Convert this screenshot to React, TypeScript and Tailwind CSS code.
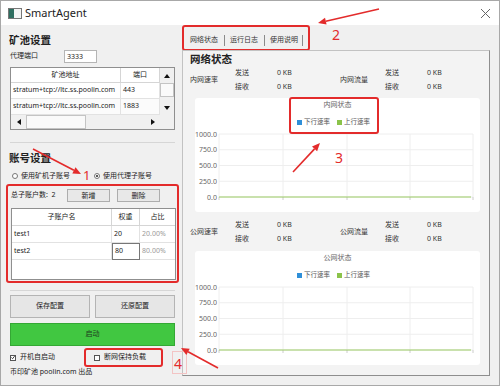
import React from 'react';

const RED = '#e32b2b';

function Tri({ dir }: { dir: 'up' | 'down' | 'left' | 'right' }) {
  const pts = { up: '0,5 3,1 6,5', down: '0,1 3,5 6,1', left: '5,0 1,3 5,6', right: '1,0 5,3 1,6' }[dir];
  return (
    <svg width="6" height="6" viewBox="0 0 6 6">
      <polygon points={pts} fill="#111" />
    </svg>
  );
}

function Arrow({ x1, y1, x2, y2 }: { x1: number; y1: number; x2: number; y2: number }) {
  const a = Math.atan2(y2 - y1, x2 - x1);
  const len = 8;
  const w = 3.5;
  const bx = x2 - Math.cos(a) * len;
  const by = y2 - Math.sin(a) * len;
  const p1 = `${bx + Math.sin(a) * w},${by - Math.cos(a) * w}`;
  const p2 = `${bx - Math.sin(a) * w},${by + Math.cos(a) * w}`;
  return (
    <g>
      <line x1={x1} y1={y1} x2={bx} y2={by} stroke={RED} strokeWidth="1.6" />
      <polygon points={`${x2},${y2} ${p1} ${p2}`} fill={RED} />
    </g>
  );
}

function Chart({ title, boxed }: { title: string; boxed?: boolean }) {
  const ys = [6, 21.75, 37.5, 53.25, 69];
  const labels = ['1000.0', '750.0', '500.0', '250.0', '0.0'];
  return (
    <div className="relative ml-[12px] w-[285px] h-[114px] bg-white rounded-[3px]">
      {boxed && (
        <div className="absolute left-[94px] top-[-1px] w-[90px] h-[37px] border-2 border-[#e32b2b] rounded-[3px]" />
      )}
      <div className="pt-[2px] h-[12px] leading-[10px] text-center text-[7px] text-[#666]">{title}</div>
      <div className="mt-[7px] h-[10px] flex items-center pl-[102px] text-[6.5px] text-[#555] leading-[10px]">
        <span className="w-[5px] h-[5px] bg-[#2f8fd8]" />
        <span className="ml-[2px]">下行速率</span>
        <span className="ml-[7px] w-[5px] h-[5px] bg-[#8bc34a]" />
        <span className="ml-[2px]">上行速率</span>
      </div>
      <svg className="mt-[1px]" width="285" height="78" viewBox="0 0 285 78">
        {ys.map((y, i) => (
          <g key={i}>
            <line x1="24" y1={y} x2="278" y2={y} stroke="#eeeeee" strokeWidth="1" />
            <text x="22" y={y + 2.5} textAnchor="end" fontSize="7" fill="#666" fontFamily="Noto Sans, sans-serif">
              {labels[i]}
            </text>
          </g>
        ))}
        {[24, 88, 152, 215, 278].map(x => (
          <g key={x}>
            <line x1={x} y1="6" x2={x} y2="69" stroke="#eeeeee" strokeWidth="1" />
            <line x1={x} y1="69" x2={x} y2="72" stroke="#cccccc" strokeWidth="1" />
          </g>
        ))}
        <line x1="24" y1="69" x2="276" y2="69" stroke="#9ccc65" strokeWidth="1.2" />
      </svg>
    </div>
  );
}

function Stats({ a, b }: { a: string; b: string }) {
  const group = (label: string) => (
    <div className="flex items-center">
      <div className="w-[45px]">{label}</div>
      <div className="w-[42px]">
        <div>发送</div>
        <div>接收</div>
      </div>
      <div className="w-[63px]">
        <div>0 KB</div>
        <div>0 KB</div>
      </div>
    </div>
  );
  return (
    <div className="flex pl-[7px] text-[7px] leading-[14px] text-[#333]">
      {group(a)}
      {group(b)}
    </div>
  );
}

export default function App() {
  return (
    <div className="relative w-[500px] h-[386px] overflow-hidden border border-[#a8a8a8] bg-[#f0f0f0] font-['Noto_Sans','Noto_Sans_CJK_SC',sans-serif] text-[#222]">
      {/* title bar */}
      <div className="h-[24px] bg-white flex items-center pl-[7px] pr-[8px]">
        <svg width="14" height="11" viewBox="0 0 14 11">
          <rect x="0.5" y="0.5" width="13" height="10" fill="#f4f4f4" stroke="#777" />
          <rect x="1" y="1" width="5" height="9" fill="#2f6e60" />
        </svg>
        <span className="ml-[3px] text-[11px] text-[#222] leading-[14px]">SmartAgent</span>
        <svg className="ml-auto" width="11" height="11" viewBox="0 0 11 11">
          <line x1="1" y1="1" x2="10" y2="10" stroke="#666" strokeWidth="1" />
          <line x1="10" y1="1" x2="1" y2="10" stroke="#666" strokeWidth="1" />
        </svg>
      </div>

      <div className="flex">
        {/* left panel */}
        <div className="w-[178px] pl-[9px] pt-[8px] text-[7px]">
          <div className="h-[14px] leading-[14px] text-[10.5px] font-bold -ml-px">矿池设置</div>
          <div className="mt-[3px] h-[13px] flex items-center">
            <span className="w-[54px]">代理端口</span>
            <div className="w-[33px] h-[13px] bg-white border border-[#b5b5b5] pl-[2px] leading-[11px]">3333</div>
          </div>

          <div className="mt-[4px] w-[165px] h-[63px] border border-[#8f8f8f] bg-white grid grid-cols-[110px_39px_14px] grid-rows-[15px_16px_16px_14px]">
            <div className="border-r border-b border-[#d5d5d5] flex items-center justify-center">矿池地址</div>
            <div className="border-r border-b border-[#d5d5d5] flex items-center justify-center">端口</div>
            <div className="row-span-3 bg-[#f0f0f0] flex flex-col">
              <div className="h-[15px] flex items-center justify-center"><Tri dir="up" /></div>
              <div className="h-[14px] bg-[#fafafa] border border-[#c4c4c4]" />
              <div className="flex-1" />
              <div className="h-[15px] flex items-center justify-center"><Tri dir="down" /></div>
            </div>
            <div className="border-r border-b border-[#e2e2e2] pl-[2px] flex items-center">stratum+tcp://ltc.ss.poolin.com</div>
            <div className="border-r border-b border-[#e2e2e2] pl-[2px] flex items-center">443</div>
            <div className="border-r border-b border-[#e2e2e2] pl-[2px] flex items-center bg-[#fbfbfb]">stratum+tcp://ltc.ss.poolin.com</div>
            <div className="border-r border-b border-[#e2e2e2] pl-[2px] flex items-center bg-[#fbfbfb]">1883</div>
            <div className="col-span-2 bg-[#f0f0f0] flex">
              <div className="w-[15px] flex items-center justify-center"><Tri dir="left" /></div>
              <div className="w-[60px] bg-[#fafafa] border border-[#c4c4c4]" />
              <div className="flex-1" />
              <div className="w-[15px] flex items-center justify-center"><Tri dir="right" /></div>
            </div>
            <div className="bg-[#f0f0f0]" />
          </div>

          <div className="mt-[12px] w-[165px] h-px bg-[#d6d6d6]" />
          <div className="mt-[8px] h-[14px] leading-[14px] text-[10.5px] font-bold -ml-px">账号设置</div>

          <div className="mt-[5px] h-[12px] flex items-center">
            <div className="w-[84px] flex items-center pl-[2px]">
              <span className="w-[6px] h-[6px] rounded-full border border-[#777] bg-white" />
              <span className="ml-[3px]">使用矿机子账号</span>
            </div>
            <div className="flex items-center">
              <span className="w-[6px] h-[6px] rounded-full border border-[#777] bg-white flex items-center justify-center">
                <span className="w-[2px] h-[2px] rounded-full bg-[#222]" />
              </span>
              <span className="ml-[3px]">使用代理子账号</span>
            </div>
          </div>

          {/* box 1 */}
          <div className="mt-[2px] -ml-[4px] w-[173px] h-[99px] border-2 border-[#e32b2b] rounded-[3px] pl-[3px] pt-[3px]">
            <div className="h-[13px] flex items-center">
              <span className="w-[56px]">总子账户数:&nbsp; 2</span>
              <button className="w-[43px] h-[13px] bg-[#e8e8e8] border border-[#adadad] leading-[11px]">新增</button>
              <button className="ml-[7px] w-[43px] h-[13px] bg-[#e8e8e8] border border-[#adadad] leading-[11px]">删除</button>
            </div>
            <div className="mt-[6px] w-[165px] h-[72px] border border-[#8f8f8f] bg-white grid grid-cols-[100px_28px_35px] grid-rows-[17px_17px_17px_1fr]">
              <div className="border-r border-b border-[#d5d5d5] flex items-center justify-center">子账户名</div>
              <div className="border-r border-b border-[#d5d5d5] flex items-center justify-center">权重</div>
              <div className="border-b border-[#d5d5d5] flex items-center justify-center">占比</div>
              <div className="border-r border-b border-[#e2e2e2] pl-[2px] flex items-center">test1</div>
              <div className="border-r border-b border-[#e2e2e2] pl-[2px] flex items-center">20</div>
              <div className="border-b border-[#e2e2e2] pl-[2px] flex items-center text-[#9a9a9a]">20.00%</div>
              <div className="border-r border-b border-[#e2e2e2] pl-[2px] flex items-center">test2</div>
              <div className="border border-[#777] pl-[2px] flex items-center">80</div>
              <div className="border-b border-[#e2e2e2] pl-[2px] flex items-center text-[#9a9a9a]">80.00%</div>
              <div className="col-span-3" />
            </div>
          </div>

          <div className="mt-[7px] w-[165px] h-px bg-[#d6d6d6]" />
          <div className="mt-[4px] flex gap-[5px]">
            <button className="w-[80px] h-[23px] bg-[#e6e6e6] border border-[#b4b4b4]">保存配置</button>
            <button className="w-[80px] h-[23px] bg-[#e6e6e6] border border-[#b4b4b4]">还原配置</button>
          </div>
          <button className="mt-[5px] block w-[165px] h-[23px] bg-[#41c741] border border-[#34a834] text-[#1e3a1e]">启动</button>

          <div className="mt-[2px] h-[19px] flex items-center">
            <div className="w-[74px] flex items-center">
              <span className="w-[6px] h-[6px] border border-[#555] bg-white flex items-center justify-center">
                <svg width="5" height="5" viewBox="0 0 5 5">
                  <polyline points="0.5,2.5 2,4 4.5,0.8" fill="none" stroke="#111" strokeWidth="1" />
                </svg>
              </span>
              <span className="ml-[4px]">开机自启动</span>
            </div>
            <div className="w-[79px] h-[19px] border-2 border-[#e32b2b] rounded-[3px] flex items-center pl-[8px]">
              <span className="w-[6px] h-[6px] border border-[#555] bg-white" />
              <span className="ml-[4px]">断网保持负载</span>
            </div>
          </div>
          <div className="h-[10px] leading-[10px]">币印矿池 poolin.com 出品</div>
        </div>

        {/* right panel */}
        <div className="flex-1">
          <div className="ml-[3px] w-[128px] h-[26px] border-2 border-[#e32b2b] rounded-[3px] flex items-center pt-[4px] pl-[6px] text-[7px] text-[#333]">
            <span>网络状态</span>
            <span className="ml-[6px] w-px h-[11px] bg-[#8a8a8a]" />
            <span className="ml-[5px]">运行日志</span>
            <span className="ml-[6px] w-px h-[11px] bg-[#8a8a8a]" />
            <span className="ml-[5px]">使用说明</span>
            <span className="ml-[4px] w-px h-[11px] bg-[#8a8a8a]" />
          </div>
          <div className="-mt-px ml-[3px] w-[308px] h-[326px] border border-[#c2c2c2] border-r-[#8e8e8e] border-b-[#8e8e8e] bg-[#f3f3f3]">
            <div className="mt-px pl-[7px] h-[14px] leading-[14px] text-[10.5px] font-bold">网络状态</div>
            <Stats a="内网速率" b="内网流量" />
            <div className="mt-[4px]">
              <Chart title="内网状态" boxed />
            </div>
            <div className="mt-[6px]">
              <Stats a="公网速率" b="公网流量" />
            </div>
            <div className="mt-[5px]">
              <Chart title="公网状态" />
            </div>
          </div>
        </div>
      </div>

      {/* annotations */}
      <div className="absolute left-[171px] top-[350px] w-[15px] h-[23px] border border-[#f3c4c4]" />
      <span className="absolute left-[82px] top-[166px] text-[13px] leading-[16px] text-[#e32b2b]">1</span>
      <span className="absolute left-[331px] top-[25px] text-[14px] leading-[17px] text-[#e32b2b]">2</span>
      <span className="absolute left-[334px] top-[148px] text-[14px] leading-[17px] text-[#e32b2b]">3</span>
      <span className="absolute left-[173px] top-[354px] text-[14px] leading-[17px] text-[#e32b2b]">4</span>
      <svg className="absolute left-0 top-0 pointer-events-none" width="500" height="386" viewBox="0 0 500 386">
        <Arrow x1={32} y1={148} x2={80} y2={173} />
        <Arrow x1={378} y1={8} x2={317} y2={22} />
        <Arrow x1={292} y1={171} x2={319} y2={142} />
        <Arrow x1={217} y1={367} x2={180} y2={347} />
      </svg>
    </div>
  );
}
